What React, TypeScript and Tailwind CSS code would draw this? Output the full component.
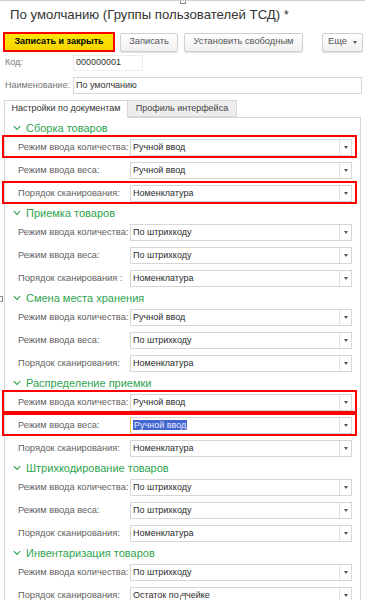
import React from 'react';

type Row = { label: string; value: string; red?: boolean; selected?: boolean };
type Section = { title: string; rows: Row[] };

const sections: Section[] = [
  {
    title: 'Сборка товаров',
    rows: [
      { label: 'Режим ввода количества:', value: 'Ручной ввод', red: true },
      { label: 'Режим ввода веса:', value: 'Ручной ввод' },
      { label: 'Порядок сканирования:', value: 'Номенклатура', red: true },
    ],
  },
  {
    title: 'Приемка товаров',
    rows: [
      { label: 'Режим ввода количества:', value: 'По штрихкоду' },
      { label: 'Режим ввода веса:', value: 'По штрихкоду' },
      { label: 'Порядок сканирования :', value: 'Номенклатура' },
    ],
  },
  {
    title: 'Смена места хранения',
    rows: [
      { label: 'Режим ввода количества:', value: 'Ручной ввод' },
      { label: 'Режим ввода веса:', value: 'По штрихкоду' },
      { label: 'Порядок сканирования:', value: 'Номенклатура' },
    ],
  },
  {
    title: 'Распределение приемки',
    rows: [
      { label: 'Режим ввода количества:', value: 'Ручной ввод', red: true },
      { label: 'Режим ввода веса:', value: 'Ручной ввод', red: true, selected: true },
      { label: 'Порядок сканирования:', value: 'Номенклатура' },
    ],
  },
  {
    title: 'Штрихкодирование товаров',
    rows: [
      { label: 'Режим ввода количества:', value: 'По штрихкоду' },
      { label: 'Режим ввода веса:', value: 'По штрихкоду' },
      { label: 'Порядок сканирования:', value: 'Номенклатура' },
    ],
  },
  {
    title: 'Инвентаризация товаров',
    rows: [
      { label: 'Режим ввода количества:', value: 'По штрихкоду' },
      { label: 'Порядок сканирования:', value: 'Остаток по ячейке' },
    ],
  },
];

const Arrow = () => (
  <span className="block w-0 h-0 border-l-[2px] border-r-[2px] border-t-[3px] border-l-transparent border-r-transparent border-t-[#555]" />
);

const Chevron = () => (
  <svg width="8" height="6" viewBox="0 0 8 6" className="shrink-0">
    <path d="M0.8 1.2 L4 4.4 L7.2 1.2" fill="none" stroke="#2ea44f" strokeWidth="1.1" />
  </svg>
);

const Field = ({ row }: { row: Row }) => (
  <div className="relative flex items-center h-[23px] pl-[13px] pr-[8px]">
    <span className="w-[112px] shrink-0 text-[9.3px] text-[#5f5f5f] whitespace-nowrap">{row.label}</span>
    <div
      className={`flex-1 flex items-center h-[17px] bg-white border border-[#d6d6d6] ${
        row.selected ? 'border-l-[#f0c040]' : ''
      }`}
    >
      <div className="flex-1 pl-[2px] text-[9px] text-[#2b2b2b] whitespace-nowrap">
        {row.selected ? <span className="bg-[#4466d0] text-[#e8ecff] px-[1px]">{row.value}</span> : row.value}
      </div>
      <div className="w-[12px] h-full border-l border-[#e0e0e0] flex items-center justify-center">
        <Arrow />
      </div>
    </div>
    {row.red && (
      <div className="absolute -left-[3px] right-[3px] -top-[1px] bottom-[1px] border-2 border-[#f00] pointer-events-none" />
    )}
  </div>
);

const Btn = ({ children, className = '' }: { children: React.ReactNode; className?: string }) => (
  <div
    className={`h-[19px] flex items-center justify-center rounded-[2px] border border-[#cfcfcf] bg-gradient-to-b from-white to-[#f0f0f0] shadow-[0_1px_1px_rgba(0,0,0,0.12)] text-[9.3px] text-[#555] ${className}`}
  >
    {children}
  </div>
);

export default function App() {
  return (
    <div className="relative w-[365px] h-[600px] overflow-hidden bg-white font-['Liberation_Sans',Arial,sans-serif] border-t border-[#d0d0d0]">
      {/* selection handles of the picture frame */}
      <div className="absolute left-[180px] -top-[3px] w-[6px] h-[6px] bg-white border border-[#888] z-10" />
      <div className="absolute -left-[3px] top-[295px] w-[6px] h-[6px] bg-white border border-[#888] z-10" />
      <div className="absolute left-[180px] top-[594px] w-[6px] h-[6px] bg-white border border-[#888] z-10" />

      <div className="pl-[10px] pt-[5px] text-[13.2px] leading-[18px] text-[#333] whitespace-nowrap">
        По умолчанию (Группы пользователей ТСД) *
      </div>

      <div className="flex items-center mt-[8px] pl-[3px] h-[20px]">
        <div className="w-[112px] h-[20px] border-2 border-[#f00] bg-gradient-to-b from-[#ffe800] to-[#f7d400] flex items-center justify-center text-[9px] font-bold text-black">
          Записать и закрыть
        </div>
        <Btn className="ml-[5px] w-[58px]">Записать</Btn>
        <Btn className="ml-[6px] w-[119px]">Установить свободным</Btn>
        <Btn className="ml-[19px] w-[41px] gap-[6px]">
          <span>Еще</span>
          <Arrow />
        </Btn>
      </div>

      <div className="flex items-center mt-[2px] h-[17px] pl-[5px]">
        <span className="w-[68px] text-[9px] text-[#777]">Код:</span>
        <div className="w-[70px] h-[16px] border border-[#ececec] pl-[2px] flex items-center text-[9px] text-[#333]">
          000000001
        </div>
      </div>

      <div className="flex items-center mt-[6px] h-[17px] pl-[5px] pr-[3px]">
        <span className="w-[68px] text-[9px] text-[#777] whitespace-nowrap">Наименование:</span>
        <div className="flex-1 h-[17px] border border-[#d6d6d6] pl-[2px] flex items-center text-[9px] text-[#333]">
          По умолчанию
        </div>
      </div>

      <div className="flex mt-[6px] pl-[4px] h-[17px] relative z-[1]">
        <div className="w-[124px] h-[18px] bg-white border border-[#d6d6d6] border-b-white flex items-center justify-center text-[9px] text-[#333] whitespace-nowrap">
          Настройки по документам
        </div>
        <div className="w-[109px] h-[17px] bg-[#ededed] border border-l-0 border-[#d6d6d6] flex items-center justify-center text-[9px] text-[#444] whitespace-nowrap">
          Профиль интерфейса
        </div>
      </div>

      <div className="ml-[4px] mr-[4px] border border-[#d6d6d6] pt-[2px] h-[600px]">
        {sections.map((s) => (
          <div key={s.title}>
            <div className="flex items-center h-[16px] pl-[8px] gap-[5px]">
              <Chevron />
              <span className="text-[11px] text-[#2ea44f] whitespace-nowrap leading-none">{s.title}</span>
            </div>
            {s.rows.map((r, i) => (
              <Field key={i} row={r} />
            ))}
          </div>
        ))}
      </div>
    </div>
  );
}
